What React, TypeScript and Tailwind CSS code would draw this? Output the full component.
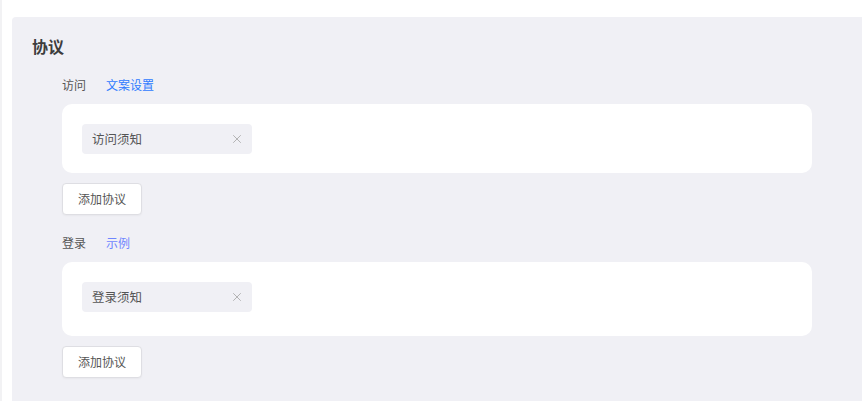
import { X } from 'lucide-react';

type Section = {
  label: string;
  link: string;
  linkColor: string;
  tag: string;
  cardClass: string;
};

const sections: Section[] = [
  { label: '访问', link: '文案设置', linkColor: 'text-[#2f7bff]', tag: '访问须知', cardClass: 'pt-5 pb-[19px]' },
  { label: '登录', link: '示例', linkColor: 'text-[#6f86ff]', tag: '登录须知', cardClass: 'pt-5 pb-6' },
];

function AgreementBlock({ s, first }: { s: Section; first: boolean }) {
  return (
    <div className={first ? '' : 'mt-[17px]'}>
      <div className="flex h-[22px] items-center gap-[20px] text-[12px] leading-none">
        <span className="text-[#555]">{s.label}</span>
        <span className={s.linkColor}>{s.link}</span>
      </div>
      <div className={`mt-[8px] w-[750px] rounded-[10px] bg-white px-5 ${s.cardClass}`}>
        <div className="flex h-[30px] w-[170px] items-center justify-between rounded-[4px] bg-[#f0f0f5] pl-[10px] pr-[8px]">
          <span className="text-[12.5px] text-[#555]">{s.tag}</span>
          <X size={14} strokeWidth={1.5} className="text-[#aaa]" />
        </div>
      </div>
      <button className="mt-[10px] flex h-[32px] w-[80px] items-center justify-center rounded-[4px] border border-[#dedee3] bg-white text-[12px] text-[#555] shadow-[0_1px_2px_rgba(0,0,0,0.04)]">
        添加协议
      </button>
    </div>
  );
}

export default function App() {
  return (
    <div
      className="flex h-[401px] w-[862px] overflow-hidden bg-white"
      style={{ fontFamily: '"Noto Sans CJK SC", "Noto Sans", sans-serif' }}
    >
      <div className="h-full w-[2px] bg-[#f2f2f4]" />
      <div className="flex-1 pl-[10px] pt-[17px]">
        <div className="h-full rounded-tl-[4px] bg-[#f0f0f5] pl-[20px] pt-[18px]">
          <h2 className="text-[16px] font-semibold leading-[22px] text-[#3d3d3d]">协议</h2>
          <div className="mt-[17px] pl-[30px]">
            {sections.map((s, i) => (
              <AgreementBlock key={s.label} s={s} first={i === 0} />
            ))}
          </div>
        </div>
      </div>
    </div>
  );
}
